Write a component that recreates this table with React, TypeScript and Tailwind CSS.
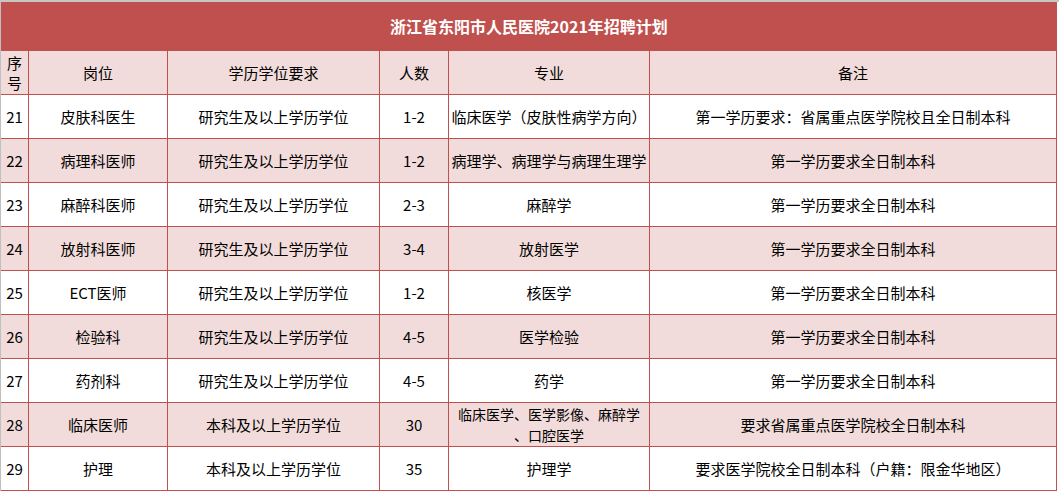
import React from 'react';

type Row = {
  no: string;
  post: string;
  degree: string;
  count: string;
  major: React.ReactNode;
  note: string;
};

const rows: Row[] = [
  { no: '21', post: '皮肤科医生', degree: '研究生及以上学历学位', count: '1-2', major: '临床医学（皮肤性病学方向）', note: '第一学历要求：省属重点医学院校且全日制本科' },
  { no: '22', post: '病理科医师', degree: '研究生及以上学历学位', count: '1-2', major: '病理学、病理学与病理生理学', note: '第一学历要求全日制本科' },
  { no: '23', post: '麻醉科医师', degree: '研究生及以上学历学位', count: '2-3', major: '麻醉学', note: '第一学历要求全日制本科' },
  { no: '24', post: '放射科医师', degree: '研究生及以上学历学位', count: '3-4', major: '放射医学', note: '第一学历要求全日制本科' },
  { no: '25', post: 'ECT医师', degree: '研究生及以上学历学位', count: '1-2', major: '核医学', note: '第一学历要求全日制本科' },
  { no: '26', post: '检验科', degree: '研究生及以上学历学位', count: '4-5', major: '医学检验', note: '第一学历要求全日制本科' },
  { no: '27', post: '药剂科', degree: '研究生及以上学历学位', count: '4-5', major: '药学', note: '第一学历要求全日制本科' },
  {
    no: '28',
    post: '临床医师',
    degree: '本科及以上学历学位',
    count: '30',
    major: (
      <span className="text-[14px] leading-[21px]">
        临床医学、医学影像、麻醉学
        <br />
        、口腔医学
      </span>
    ),
    note: '要求省属重点医学院校全日制本科',
  },
  { no: '29', post: '护理', degree: '本科及以上学历学位', count: '35', major: '护理学', note: '要求医学院校全日制本科（户籍：限金华地区）' },
];

const headers = ['序号', '岗位', '学历学位要求', '人数', '专业', '备注'];

function Cell({ children, bg, className = '' }: { children: React.ReactNode; bg: string; className?: string }) {
  return (
    <div className={`${bg} flex items-center justify-center text-center leading-[18px] ${className}`}>
      {children}
    </div>
  );
}

export default function App() {
  return (
    <div
      className="w-[1059px] h-[491px] bg-white text-black text-[15px] overflow-hidden"
      style={{ fontFamily: '"Noto Sans CJK SC", "Liberation Sans", sans-serif' }}
    >
      {/* sheet top edge */}
      <div className="h-[2px] bg-[#c6c6c6]" />

      <div className="flex">
        <div className="w-px bg-[#c0c0c0]" />
        <div className="w-[1056px]">
          {/* Title */}
          <div className="h-[49px] bg-[#c0504d] flex items-center justify-center text-white font-bold text-[16px] pb-px">
            浙江省东阳市人民医院2021年招聘计划
          </div>

          {/* Table */}
          <div className="grid grid-cols-[27px_138px_211px_68px_200px_406px] auto-rows-[43px] gap-px bg-[#c0504d] pr-px pb-px">
            {headers.map((h, i) => (
              <Cell key={h} bg="bg-[#f2dcdb]" className={i === 0 ? 'leading-[20px] px-[5px]' : ''}>
                {h}
              </Cell>
            ))}
            {rows.map((r, idx) => {
              const bg = idx % 2 === 1 ? 'bg-[#f2dcdb]' : 'bg-white';
              return (
                <React.Fragment key={r.no}>
                  <Cell bg={bg}>{r.no}</Cell>
                  <Cell bg={bg}>{r.post}</Cell>
                  <Cell bg={bg}>{r.degree}</Cell>
                  <Cell bg={bg}>{r.count}</Cell>
                  <Cell bg={bg} className="whitespace-nowrap">{r.major}</Cell>
                  <Cell bg={bg}>{r.note}</Cell>
                </React.Fragment>
              );
            })}
          </div>
        </div>
      </div>
    </div>
  );
}
